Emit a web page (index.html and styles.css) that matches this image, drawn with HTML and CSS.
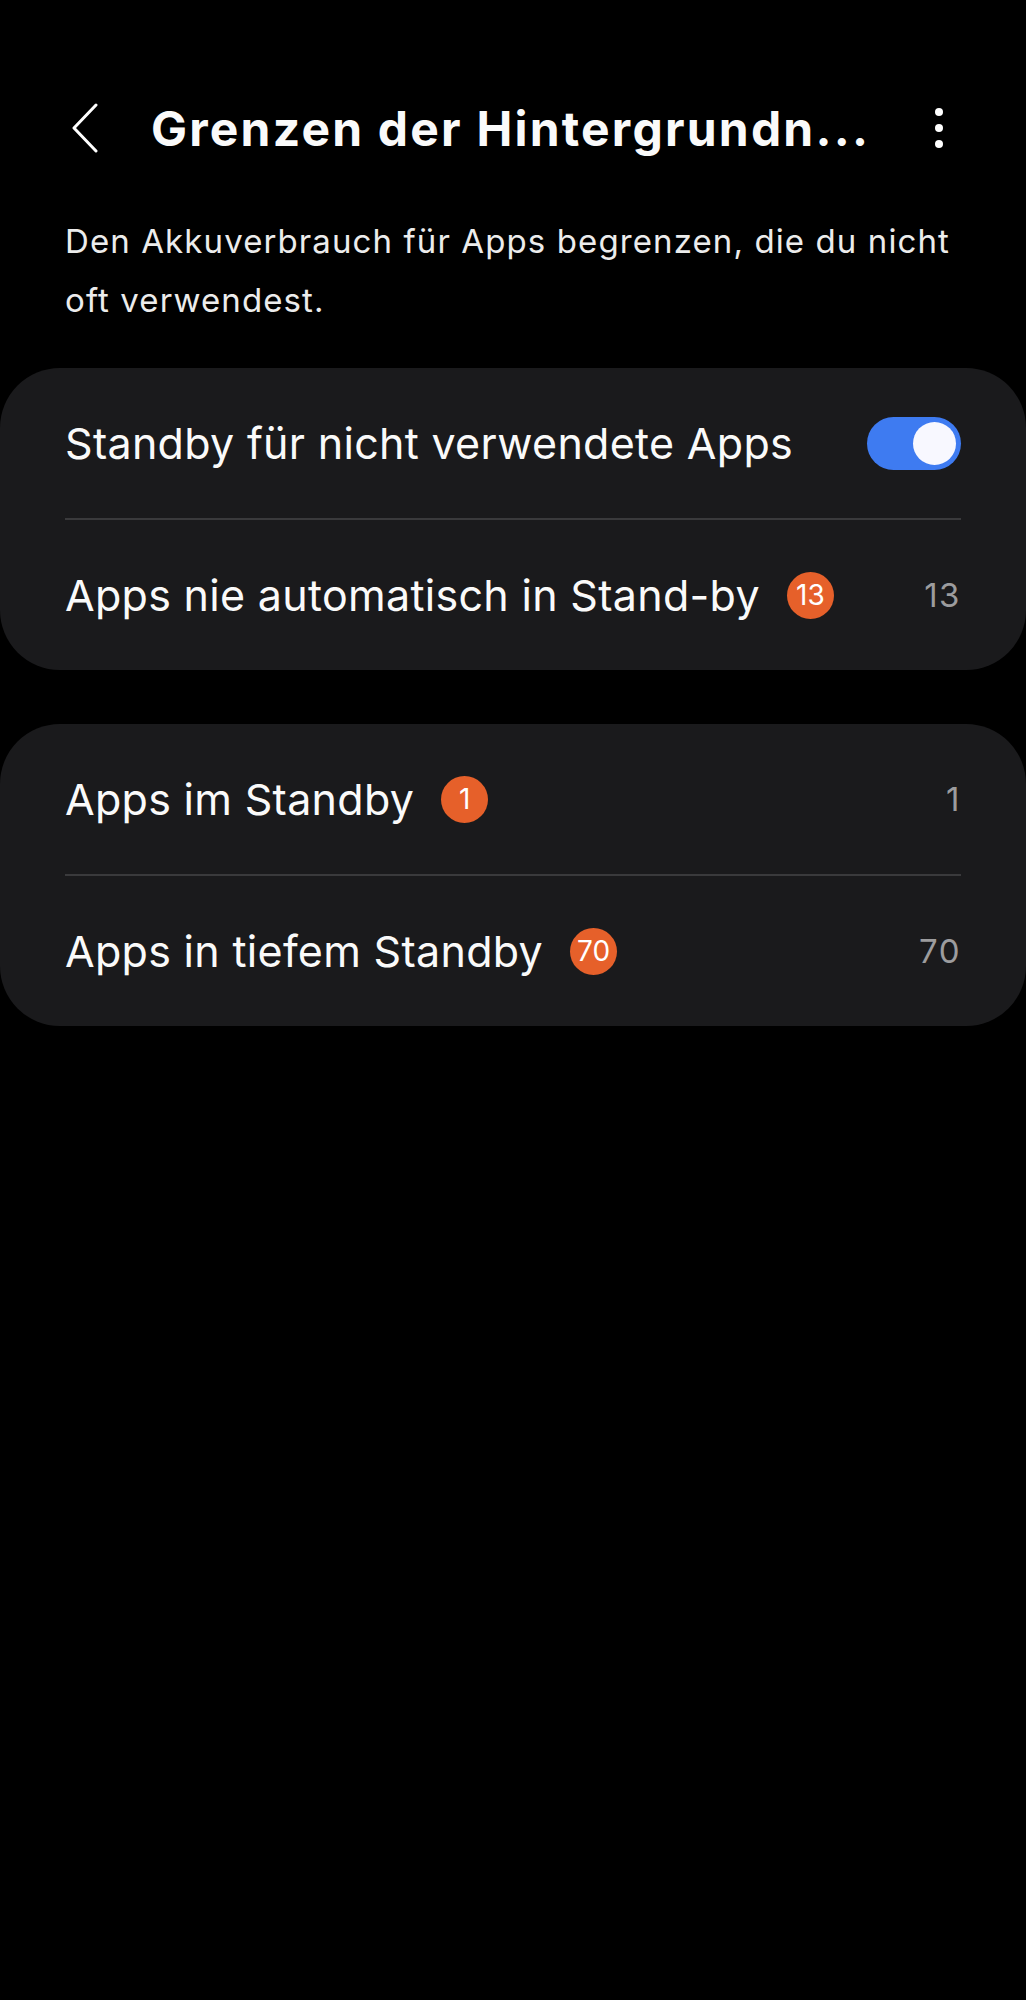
FILE: index.html
```html
<!DOCTYPE html>
<html lang="de">
<head>
  <meta charset="UTF-8">
  <title>Grenzen der Hintergrundnutzung</title>
  <link rel="stylesheet" href="styles.css">
</head>
<body>
  <div class="header">
    <div class="back">
      <svg width="28" height="50" viewBox="0 0 28 50"><polyline points="25,2 3,25 25,48" fill="none" stroke="#fff" stroke-width="3" stroke-linecap="round" stroke-linejoin="round"/></svg>
    </div>
    <h1 class="title">Grenzen der Hintergrundn...</h1>
    <div class="more"><span></span><span></span><span></span></div>
  </div>

  <p class="desc">Den Akkuverbrauch für Apps begrenzen, die du nicht oft verwendest.</p>

  <div class="card">
    <div class="row">
      <span class="label">Standby für nicht verwendete Apps</span>
      <div class="toggle on"><div class="thumb"></div></div>
    </div>
    <div class="sep"></div>
    <div class="row">
      <span class="label">Apps nie automatisch in Stand-by</span>
      <span class="badge">13</span>
      <span class="value">13</span>
    </div>
  </div>

  <div class="card">
    <div class="row">
      <span class="label">Apps im Standby</span>
      <span class="badge">1</span>
      <span class="value">1</span>
    </div>
    <div class="sep"></div>
    <div class="row">
      <span class="label">Apps in tiefem Standby</span>
      <span class="badge">70</span>
      <span class="value">70</span>
    </div>
  </div>
</body>
</html>
```

FILE: styles.css
```css
body { margin: 0; background: #000; color: #fafafa; font-family: Inter, "Noto Sans", sans-serif; }
.header { display: flex; align-items: center; height: 100px; padding-top: 78px; }
.back { margin-left: 71px; width: 28px; height: 50px; }
.title { margin: 0 0 0 52px; font-size: 48px; font-weight: 700; letter-spacing: 2.2px; white-space: nowrap; flex: 1; }
.more { display: flex; flex-direction: column; gap: 8px; margin-right: 83px; }
.more span { width: 8px; height: 8px; border-radius: 50%; background: #fff; }
.desc { margin: 34px 65px 38px; font-size: 33px; line-height: 59px; letter-spacing: 1.1px; color: #ececec; }
.card { background: #1a1a1c; border-radius: 60px; margin-bottom: 54px; }
.row { display: flex; align-items: center; height: 150px; padding: 0 65px; }
.sep { height: 2px; background: #3a3a3c; margin: 0 65px; }
.label { font-size: 43px; letter-spacing: 0.3px; }
.badge { margin-left: 27px; width: 47px; height: 47px; border-radius: 50%; background: #e6602a; color: #fff; font-size: 28px; display: flex; align-items: center; justify-content: center; }
.value { margin-left: auto; font-size: 33px; letter-spacing: 1.5px; color: #9c9c9e; }
.toggle { margin-left: auto; width: 94px; height: 53px; border-radius: 27px; background: #3e7bf1; display: flex; align-items: center; justify-content: flex-end; padding-right: 5px; box-sizing: border-box; }
.thumb { width: 43px; height: 43px; border-radius: 50%; background: #f8f8ff; }
```
